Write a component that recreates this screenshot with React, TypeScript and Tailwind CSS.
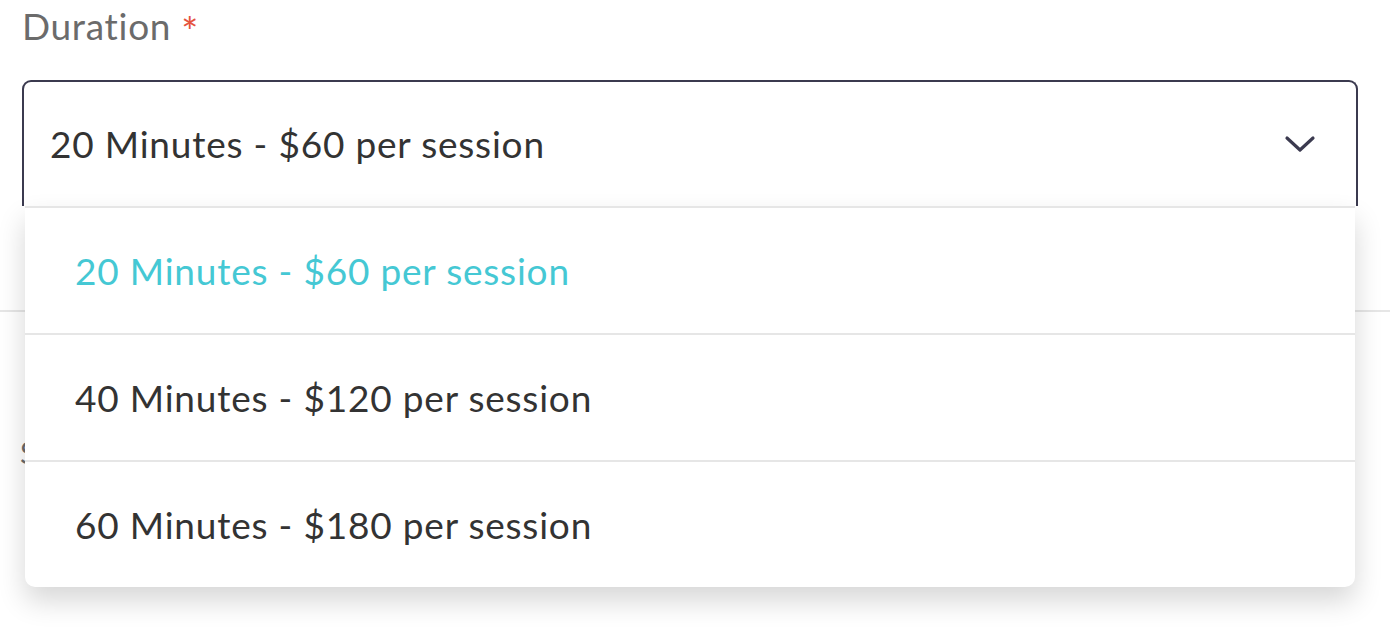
import { useState } from 'react'

const options = [
  '20 Minutes - $60 per session',
  '40 Minutes - $120 per session',
  '60 Minutes - $180 per session',
]

export default function App() {
  const [selected, setSelected] = useState(0)

  return (
    <div className="h-[636px] w-[1390px] overflow-hidden bg-white font-['Lato',sans-serif]">
      <div className="px-[22px] pr-[32px]">
        {/* Label */}
        <div className="flex h-[80px] items-start pt-[2px]">
          <span className="text-[37px] leading-[48px] tracking-[0.7px] text-[#6b6b6b]">Duration</span>
          <span className="ml-[10px] mt-[6px] text-[40px] leading-[48px] text-[#e5533d]">*</span>
        </div>

        {/* Select */}
        <div className="relative z-10">
          <div className="flex h-[126px] items-center justify-between rounded-t-[9px] border-2 border-b-0 border-[#3b3a4f] pl-[26px] pr-[40px]">
            <span className="text-[37px] tracking-[0.8px] text-[#333333]">{options[selected]}</span>
            <svg width="32" height="20" viewBox="0 0 32 20" fill="none" stroke="#3b3a4f" strokeWidth="3.2" strokeLinecap="round" strokeLinejoin="round">
              <path d="M3 4l13 12L29 4" />
            </svg>
          </div>

          {/* Menu */}
          <div className="absolute left-[3px] right-[3px] top-[126px] overflow-hidden rounded-b-[10px] bg-white shadow-[0_14px_28px_rgba(0,0,0,0.16)]">
            {options.map((o, i) => (
              <button
                key={o}
                onClick={() => setSelected(i)}
                className={`flex h-[127px] w-full items-center border-t-2 border-[#e6e6e6] pl-[50px] text-left text-[37px] tracking-[0.8px] ${
                  i === selected ? 'text-[#45c8d4]' : 'text-[#333333]'
                }`}
              >
                {o}
              </button>
            ))}
          </div>
        </div>
      </div>

      {/* Content beneath the open menu */}
      <div className="mt-[104px] border-t-2 border-[#e6e6e6]" />
      <div className="px-[20px] pt-[118px] text-[30px] text-[#6b6b6b]">Start date</div>
    </div>
  )
}
